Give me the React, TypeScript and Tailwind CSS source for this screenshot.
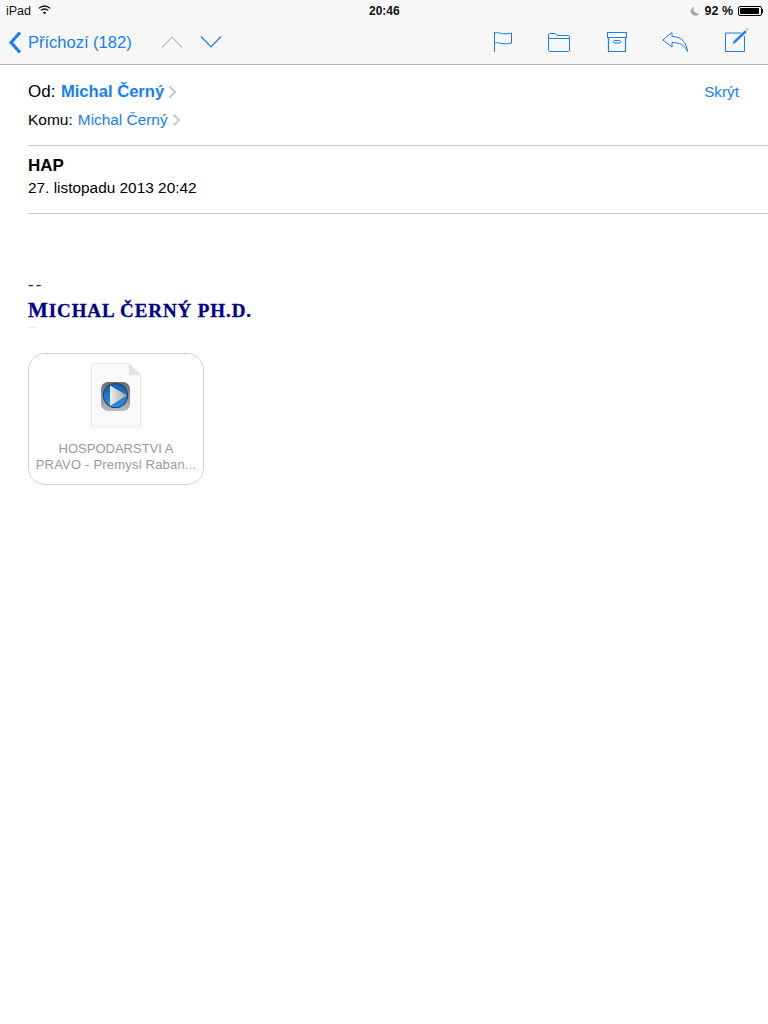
const BLUE = '#147efb';

function Chevron() {
  return (
    <svg width="9" height="14" viewBox="0 0 9 14" fill="none" className="shrink-0">
      <path d="M1.5 1.5 L7 7 L1.5 12.5" stroke="#c7c7cc" strokeWidth="2" />
    </svg>
  );
}

function Flag() {
  return (
    <svg width="20" height="20" viewBox="0 0 20 20" fill="none" stroke={BLUE} strokeWidth="1">
      <path d="M1.5 0 V20" />
      <path d="M1.5 1 C6 -0.5 9 3.5 18.5 1 V11 C9 13.5 6 9.5 1.5 11" />
    </svg>
  );
}

function Folder() {
  return (
    <svg width="22" height="19" viewBox="0 0 22 19" fill="none" stroke={BLUE} strokeWidth="1">
      <path d="M0.5 17 V2 C0.5 1 1 0.5 2 0.5 H7 C8 0.5 8.5 2.5 10 2.5 H20 C21 2.5 21.5 3 21.5 4 V17 C21.5 18 21 18.5 20 18.5 H2 C1 18.5 0.5 18 0.5 17 Z" />
      <path d="M0.5 5.5 H21.5" />
    </svg>
  );
}

function Archive() {
  return (
    <svg width="20" height="20" viewBox="0 0 20 20" fill="none" stroke={BLUE} strokeWidth="1">
      <rect x="0.5" y="0.5" width="19" height="5" />
      <path d="M1.5 5.5 V19.5 H18.5 V5.5" strokeWidth="1.2" />
      <rect x="6.5" y="8.5" width="7" height="2.5" rx="1" />
    </svg>
  );
}

function Reply() {
  return (
    <svg width="27" height="20" viewBox="0 0 27 20" fill="none" stroke={BLUE} strokeWidth="1">
      <path d="M10 0.5 L0.8 8 L10 15 V10.5" />
      <path d="M10 0.5 V4.5 C19 4.5 24.5 10 25.5 19.5 C22.5 13 18 10.5 10 10.5" />
    </svg>
  );
}

function Compose() {
  return (
    <svg width="24" height="24" viewBox="0 0 24 24" fill="none" stroke={BLUE} strokeWidth="1" className="-mt-1">
      <path d="M19.5 8 V23.5 H0.5 V5 H16" />
      <path d="M8 15.5 L9 13 L20 2.5 L21.5 4 L10.5 14.5 Z" fill={BLUE} strokeWidth="0.4" />
      <path d="M21.5 1.5 L22.5 0.8" strokeWidth="1.2" />
    </svg>
  );
}

function FileThumb() {
  return (
    <svg width="50" height="65" viewBox="0 0 50 65" className="block">
      <path d="M1.5 0.5 H38 L49.5 12 V65 H1.5 C1 65 0.5 64.5 0.5 64 V1.5 C0.5 1 1 0.5 1.5 0.5 Z" fill="#f9f9f9" stroke="#e6e6e6" />
      <path d="M38 0.5 V12 H49.5 Z" fill="#e4e4e4" />
      <defs>
        <linearGradient id="tile" x1="0" y1="0" x2="0" y2="1">
          <stop offset="0" stopColor="#666c72" />
          <stop offset="0.5" stopColor="#8b9095" />
          <stop offset="1" stopColor="#b8bbbe" />
        </linearGradient>
        <linearGradient id="disc" x1="0" y1="0" x2="0" y2="1">
          <stop offset="0" stopColor="#0f5fb0" />
          <stop offset="1" stopColor="#2d8fe6" />
        </linearGradient>
        <linearGradient id="play" x1="0" y1="0" x2="1" y2="0">
          <stop offset="0" stopColor="#eeeeee" />
          <stop offset="1" stopColor="#a3a3a3" />
        </linearGradient>
      </defs>
      <rect x="10" y="19" width="29" height="29" rx="7" fill="url(#tile)" />
      <circle cx="24.5" cy="32.5" r="12.6" fill="#24405e" />
      <circle cx="24.5" cy="32.5" r="11.6" fill="url(#disc)" />
      <path d="M19 22.5 L36 32.5 L19 43 Z" fill="url(#play)" />
    </svg>
  );
}

export default function App() {
  return (
    <div className="min-h-[1024px] bg-white font-['Liberation_Sans',sans-serif] text-black">
      <header className="h-[65px] bg-[#f7f7f7] border-b border-[#b4b4b4]">
        <div className="h-5 pl-1.5 pr-[5px] pt-[2px] flex items-center justify-between relative">
          <div className="flex items-center gap-[7px] text-[#111]">
            <span className="text-[12.5px]">iPad</span>
            <svg width="13" height="10" viewBox="0 0 13 10" fill="none" stroke="#111" className="mb-[3px]">
              <path d="M0.8 3.4 C4 0.2 9 0.2 12.2 3.4" strokeWidth="1.3" />
              <path d="M2.8 5.4 C4.8 3.5 8.2 3.5 10.2 5.4" strokeWidth="1.3" />
              <path d="M6.5 9.2 L4.8 7.4 C5.8 6.6 7.2 6.6 8.2 7.4 Z" fill="#111" stroke="none" />
            </svg>
          </div>
          <span className="absolute left-[369px] top-[3px] font-bold text-[12px] leading-4 text-[#111]">20:46</span>
          <div className="flex items-center">
            <svg width="10" height="10" viewBox="0 0 10 10">
              <path d="M4.2 0.8 A4.6 4.6 0 1 0 9.4 7.4 A4.6 4.6 0 0 1 4.2 0.8 Z" fill="#a8a8a8" />
            </svg>
            <span className="ml-[5px] font-bold text-[12.5px] text-[#111]">92 %</span>
            <div className="ml-[5px] flex items-center">
              <div className="w-[24px] h-[10px] border border-black rounded-[2px] p-[1px]">
                <div className="w-[19px] h-full bg-black rounded-[1px]" />
              </div>
              <div className="w-[1px] h-1 bg-black" />
            </div>
          </div>
        </div>
        <div className="h-11 flex items-center text-[#147efb]">
          <svg width="14" height="23" viewBox="0 0 14 23" fill="none" className="ml-2" stroke={BLUE} strokeWidth="3">
            <path d="M12 1.5 L3 11.5 L12 21.5" />
          </svg>
          <span className="ml-[6px] text-[16.5px]">Příchozí (182)</span>
          <svg width="22" height="12" viewBox="0 0 22 12" fill="none" stroke="#c4c4c4" className="ml-[29px]" strokeWidth="1.2">
            <path d="M1 11.5 L11 1 L21 11.5" />
          </svg>
          <svg width="22" height="12" viewBox="0 0 22 12" fill="none" stroke={BLUE} className="ml-[17px]" strokeWidth="1.2">
            <path d="M1 0.5 L11 11 L21 0.5" />
          </svg>
          <div className="ml-auto mr-[19px] flex items-center">
            <Flag />
            <span className="ml-[35px]"><Folder /></span>
            <span className="ml-[37px]"><Archive /></span>
            <span className="ml-[35px]"><Reply /></span>
            <span className="ml-[36px] flex"><Compose /></span>
          </div>
        </div>
      </header>

      <main className="pl-7">
        <div className="h-[81px] pt-[16px] border-b border-[#c8c8c8] pr-7">
          <div className="h-[22px] flex items-center">
            <span className="text-[17px]">Od:</span>
            <span className="ml-[5.5px] text-[16.6px] font-bold text-[#147efb]">Michal Černý</span>
            <span className="ml-1"><Chevron /></span>
            <span className="ml-auto mr-[1px] text-[15.3px] text-[#147efb]">Skrýt</span>
          </div>
          <div className="mt-[6px] h-[22px] flex items-center">
            <span className="text-[15.5px]">Komu:</span>
            <span className="ml-[5px] text-[15.4px] text-[#147efb]">Michal Černý</span>
            <span className="ml-1"><Chevron /></span>
          </div>
        </div>

        <div className="h-[68px] border-b border-[#c8c8c8]">
          <div className="pt-[10px] text-[17px] leading-5 font-bold">HAP</div>
          <div className="mt-[2px] text-[15.4px] leading-5">27. listopadu 2013 20:42</div>
        </div>

        <div className="pt-[61px] text-[17px] leading-5 tracking-[2px] text-[#222]">--</div>
        <div className="mt-[3px] font-['Liberation_Serif',serif] font-bold text-[#00008b] text-[19px] leading-6 tracking-[0.9px] [-webkit-text-stroke:0.3px_#00008b] whitespace-nowrap">
          <span className="text-[21px]">M</span>ICHAL ČERNÝ PH.D.
        </div>
        <div className="mt-[4px] h-px w-[10px] bg-[#ececec]" />

        <div className="mt-[25px] w-[176px] h-[132px] border border-[#d0d0d0] rounded-[17px] flex flex-col items-center pt-[9px]">
          <FileThumb />
          <div className="mt-[13px] w-[166px] text-center text-[13px] leading-[16px] text-[#9a9a9a]">
            <div>HOSPODARSTVI A</div>
            <div className="whitespace-nowrap tracking-[0.2px]">PRAVO - Premysl Raban...</div>
          </div>
        </div>
      </main>
    </div>
  );
}
